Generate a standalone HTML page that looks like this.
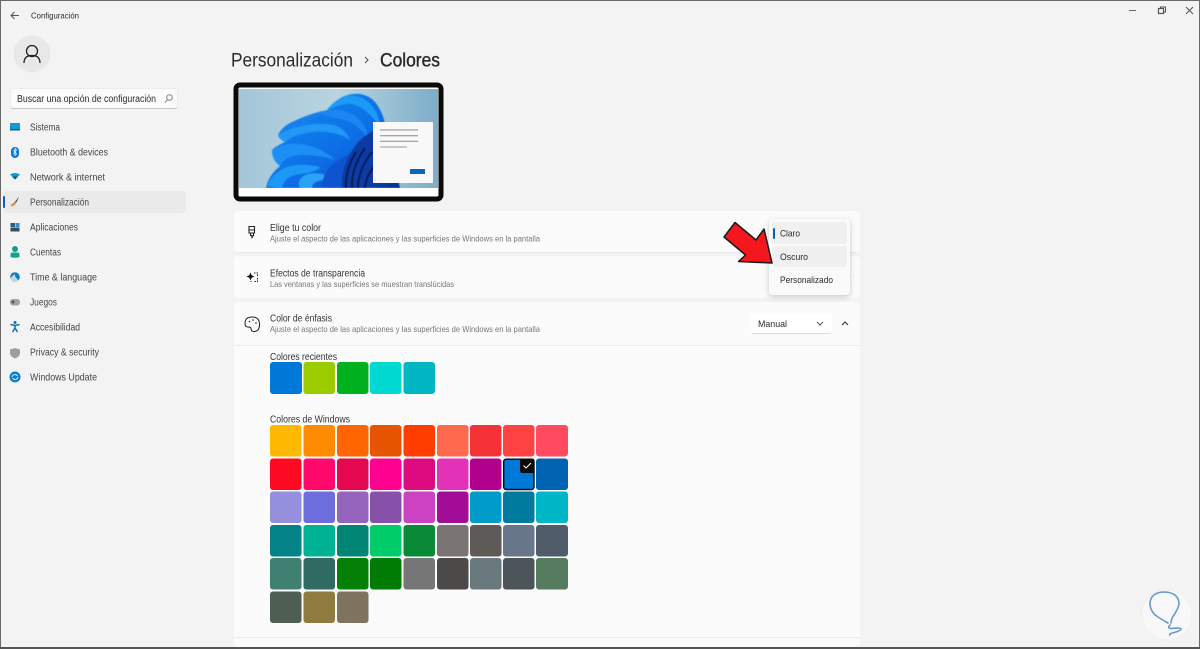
<!DOCTYPE html>
<html lang="es"><head><meta charset="utf-8"><title>Configuración</title>
<style>
html,body{margin:0;padding:0;background:#f3f3f3;width:1200px;height:649px;overflow:hidden}
svg{display:block}
text{font-family:"Liberation Sans",sans-serif;fill:#2b2b2b}
.n{font-size:10px;fill:#444}
.s{font-size:8.6px;fill:#777}
.t{font-size:9.8px;fill:#333}
</style></head><body>
<svg width="1200" height="649" viewBox="0 0 1200 649" xmlns="http://www.w3.org/2000/svg">
<defs>
<linearGradient id="bg" x1="0" y1="0" x2="1" y2="0"><stop offset="0" stop-color="#a3c6d8"/><stop offset=".5" stop-color="#b9d4e0"/><stop offset="1" stop-color="#7cadc9"/></linearGradient>
<linearGradient id="b1" x1="0" y1="0" x2="1" y2="1"><stop offset="0" stop-color="#1a8ff3"/><stop offset=".6" stop-color="#0a6be4"/><stop offset="1" stop-color="#05329a"/></linearGradient>
<filter id="sh" x="-20%" y="-20%" width="140%" height="140%"><feDropShadow dx="0" dy="2" stdDeviation="3" flood-color="#000" flood-opacity=".2"/></filter>
<filter id="bl"><feGaussianBlur stdDeviation=".5"/></filter>
<clipPath id="pv"><rect x="239" y="89" width="199" height="99"/></clipPath>
</defs>
<rect width="1200" height="649" fill="#f3f3f3"/>

<!-- title bar -->
<path d="M19 15.500H11M14.500 12L11 15.500 14.500 19" fill="none" stroke="#555" stroke-width="1"/>
<text x="31" y="18.500" font-size="8.500" textLength="48" lengthAdjust="spacingAndGlyphs" fill="#444">Configuración</text>
<path d="M1129 10.500h7" stroke="#666" stroke-width="1"/>
<rect x="1158.500" y="8.500" width="5" height="5" fill="none" stroke="#555" stroke-width="1.200"/>
<path d="M1160.500 8v-1h5v5h-1.500" fill="none" stroke="#555"/>
<path d="M1186 7l7 7M1193 7l-7 7" stroke="#555" stroke-width="1"/>

<!-- avatar -->
<circle cx="32" cy="54" r="18.500" fill="#e8e8e8"/>
<circle cx="32" cy="51" r="5.500" fill="none" stroke="#222" stroke-width="1.300"/>
<path d="M24 63c0-5.500 3.500-7.500 8-7.500s8 2 8 7.500" fill="none" stroke="#222" stroke-width="1.300"/>

<!-- search -->
<rect x="10.500" y="88.500" width="167" height="20" rx="3" fill="#fbfbfb" stroke="#ececec"/>
<path d="M11 108.500h166" stroke="#c8c8c8"/>
<text x="17" y="102" font-size="9.800" textLength="139" lengthAdjust="spacingAndGlyphs" fill="#777">Buscar una opción de configuración</text>
<circle cx="169.500" cy="97.500" r="2.800" fill="none" stroke="#888"/><path d="M167.500 99.800l-2.500 2.700" stroke="#888"/>

<!-- sidebar -->
<rect x="3" y="191" width="183" height="22" rx="4" fill="#eaeaea"/>
<rect x="3" y="196" width="2" height="12" rx="1" fill="#0a5fb4"/>
<g>
<text class="n" x="30" y="130.500" textLength="30" lengthAdjust="spacingAndGlyphs">Sistema</text>
<text class="n" x="30" y="155.500" textLength="78" lengthAdjust="spacingAndGlyphs">Bluetooth &amp; devices</text>
<text class="n" x="30" y="180.500" textLength="75" lengthAdjust="spacingAndGlyphs">Network &amp; internet</text>
<text class="n" x="30" y="205.500" textLength="59" lengthAdjust="spacingAndGlyphs">Personalización</text>
<text class="n" x="30" y="230.500" textLength="48" lengthAdjust="spacingAndGlyphs">Aplicaciones</text>
<text class="n" x="30" y="255.500" textLength="31" lengthAdjust="spacingAndGlyphs">Cuentas</text>
<text class="n" x="30" y="280.500" textLength="67" lengthAdjust="spacingAndGlyphs">Time &amp; language</text>
<text class="n" x="30" y="305.500" textLength="27" lengthAdjust="spacingAndGlyphs">Juegos</text>
<text class="n" x="30" y="330.500" textLength="50" lengthAdjust="spacingAndGlyphs">Accesibilidad</text>
<text class="n" x="30" y="355.500" textLength="69" lengthAdjust="spacingAndGlyphs">Privacy &amp; security</text>
<text class="n" x="30" y="380.500" textLength="67" lengthAdjust="spacingAndGlyphs">Windows Update</text>
</g>
<!-- sidebar icons -->
<rect x="10" y="123" width="10" height="6" fill="#0f9bd7"/><rect x="10" y="129" width="10" height="1.500" fill="#0b5f8f"/>
<rect x="11" y="147" width="8" height="11" rx="4" fill="#0a78e0"/><path d="M13.500 150l3 4-1.500 1.500v-7l1.500 1.500-3 4" fill="none" stroke="#fff" stroke-width=".7"/>
<path d="M10 174.500q5-3 10 0l-5 5z" fill="#0a9ad8"/><path d="M12.500 177q2.500-1 5 0l-2.500 2.500z" fill="#07507f"/>
<path d="M10.500 206.500q1-3 3-3.500l5.500-6-3.500 7q-2 2.500-5 2.500z" fill="#d98a4a"/><path d="M15 202l4-5.500-2.500 6z" fill="#555"/>
<rect x="10.500" y="223" width="4.500" height="4" fill="#27607f"/><rect x="10.500" y="227.500" width="9" height="4" fill="#394a5a"/><rect x="15.500" y="223" width="4" height="4" fill="#2f8fd0"/>
<circle cx="15" cy="249" r="3" fill="#0f9f8b"/><path d="M10.500 257v-2.500q0-2 2-2h5q2 0 2 2v2.500q-4.500 1.500-9 0z" fill="#10a58f"/>
<circle cx="15" cy="277" r="4.800" fill="#0a7fc6"/><path d="M10.500 278a4.500 4.500 0 0 0 8 2.500l-3-3.500-1-3z" fill="#c9d3da"/>
<rect x="10" y="299" width="10" height="6.500" rx="3" fill="#9ca4aa"/><circle cx="13" cy="302" r="1.500" fill="#4e5a62"/>
<circle cx="15" cy="322.500" r="1.500" fill="#0a72b8"/><path d="M10.500 324.500l4.500 1 4.500-1M15 325v3l-2.500 4M15 328l2.500 4" fill="none" stroke="#0a72b8" stroke-width="1.500"/>
<path d="M15 348l5 1.500v3.500q0 3.500-5 5.500-5-2-5-5.500v-3.500z" fill="#9b9fa2"/>
<circle cx="15" cy="377" r="5.500" fill="#0a7fd0"/><path d="M12 377a3 3 0 0 1 5.500-1M18 377a3 3 0 0 1-5.500 1" fill="none" stroke="#fff" stroke-width=".8"/>

<!-- heading -->
<text x="231" y="66.500" font-size="19" textLength="122" lengthAdjust="spacingAndGlyphs" fill="#5a5a5a">Personalización</text>
<path d="M365 57l3 3-3 3" fill="none" stroke="#555" stroke-width="1.100"/>
<text x="380" y="66.500" font-size="19" textLength="60" lengthAdjust="spacingAndGlyphs" fill="#1a1a1a" stroke="#1a1a1a" stroke-width=".35">Colores</text>

<!-- preview -->
<rect x="236" y="85" width="205" height="114" rx="4" fill="#fff" stroke="#0a0a0a" stroke-width="5"/>
<rect x="239" y="89" width="199" height="99" fill="url(#bg)"/>
<g clip-path="url(#pv)"><g filter="url(#bl)">
<path d="M266 188Q268 176 280 166 272 160 272 150 276 146 285 142 279 139 278 135 282 127 290 123 302 117 315 113 322 114 326 111 332 103 342 97 352 93 360 94 372 96 378 106 384 116 385 125L400 188Z" fill="url(#b1)"/>
<path d="M267 186Q272 172 290 166 305 163 320 167 318 172 300 174 284 176 282 188Z" fill="#1d98f7"/>
<path d="M300 188Q296 178 308 174 320 172 328 176 326 180 318 181 312 183 312 188Z" fill="#2aa2f8"/>
<path d="M272 150Q290 140 310 146 325 150 335 160 322 155 300 155 285 156 280 166 272 160 272 150Z" fill="#1a8ff5"/>
<path d="M278 135Q300 122 328 124 345 126 350 140 335 130 312 132 295 134 285 142 279 139 278 135Z" fill="#2097f6"/>
<path d="M315 113Q335 106 352 114 366 122 368 138 356 122 340 119 328 116 315 113Z" fill="#1a86f2"/>
<path d="M342 97Q360 92 372 106 380 116 380 128 368 108 352 104 344 102 326 111 332 103 342 97Z" fill="#1e9af8"/>
<path d="M322 188Q322 170 338 160 348 154 360 150 352 165 352 188Z" fill="#0b55cf"/>
<path d="M342 188Q340 165 358 142 366 134 378 128V188Z" fill="#0a3aa3"/>
<path d="M352 188Q351 168 365 148M358 188Q358 170 372 152M365 188Q366 176 375 165M346 188Q345 170 356 152" fill="none" stroke="#031648" stroke-width="1.800"/>
</g></g>
<rect x="239" y="188" width="199" height="8" fill="#fff"/>
<rect x="373" y="122" width="60" height="61" fill="#f8f8f8"/>
<path d="M380 130h38M380 135.700h38M380 141.300h38" stroke="#8a8a8a" stroke-width="1"/>
<path d="M380 147h27" stroke="#999" stroke-width="1"/>
<rect x="410" y="169" width="15" height="5" fill="#0a66bd"/>

<!-- cards -->
<rect x="234" y="211" width="626" height="41" rx="4" fill="#fbfbfb"/>
<path d="M238 252.500h618" stroke="#e8e8e8"/>
<rect x="234" y="256" width="626" height="42" rx="4" fill="#fbfbfb"/>
<rect x="234" y="302" width="626" height="345" rx="4" fill="#fbfbfb"/>
<path d="M234 345.500h626" stroke="#ececec"/>
<path d="M234 637.500h626" stroke="#ececec"/>

<!-- card icons -->
<path d="M249 226.500h5.500v6.500h-5.500z M249 230h5.500M250.500 233v2.500h1l.5 2 1-2h.5v-2.500" fill="none" stroke="#222" stroke-width="1.100"/>
<path d="M250.500 272.500l1.200 2.800 2.800 1.200-2.800 1.200-1.200 2.800-1.200-2.800-2.800-1.200 2.800-1.200z" fill="#111"/>
<path d="M254 273h3.500v3M257.500 278v3.500h-3M251.500 281.500h-1" fill="none" stroke="#222" stroke-dasharray="1.500 1"/>
<path d="M252 317q-7 0-7 6.500 0 3.500 3 3.500t3 1.500q0 3 3 3 5 0 5.500-6 .5-8.500-7.500-8.500z" fill="none" stroke="#222" stroke-width="1"/>
<circle cx="249.500" cy="321.500" r=".8" fill="#222"/><circle cx="253" cy="320" r=".8" fill="#222"/><circle cx="256" cy="323" r=".8" fill="#222"/>

<!-- card text -->
<text class="t" x="270" y="231" textLength="51" lengthAdjust="spacingAndGlyphs">Elige tu color</text>
<text class="s" x="270" y="241.500" textLength="270" lengthAdjust="spacingAndGlyphs">Ajuste el aspecto de las aplicaciones y las superficies de Windows en la pantalla</text>
<text class="t" x="270" y="276.500" textLength="95" lengthAdjust="spacingAndGlyphs">Efectos de transparencia</text>
<text class="s" x="270" y="287" textLength="184" lengthAdjust="spacingAndGlyphs">Las ventanas y las superficies se muestran translúcidas</text>
<text class="t" x="270" y="321.500" textLength="62" lengthAdjust="spacingAndGlyphs">Color de énfasis</text>
<text class="s" x="270" y="332" textLength="270" lengthAdjust="spacingAndGlyphs">Ajuste el aspecto de las aplicaciones y las superficies de Windows en la pantalla</text>

<!-- manual dropdown -->
<rect x="751" y="314" width="81" height="19" rx="2" fill="#fff"/>
<path d="M752 333.500h79" stroke="#ddd"/>
<text x="758" y="327" font-size="9.500" textLength="29" lengthAdjust="spacingAndGlyphs" fill="#444">Manual</text>
<path d="M817 322l3 3 3-3" fill="none" stroke="#555"/>
<path d="M842 325l3-3 3 3" fill="none" stroke="#333" stroke-width="1.100"/>
<path d="M850 275l-1 3" stroke="#999"/>

<!-- swatches recent -->
<text class="t" x="270" y="360" textLength="67" lengthAdjust="spacingAndGlyphs">Colores recientes</text>
<rect x="270" y="362" width="32" height="32" rx="3" fill="#0078d7"/>
<rect x="303.500" y="362" width="31.500" height="32" rx="3" fill="#9ccc00"/>
<rect x="337" y="362" width="31.500" height="32" rx="3" fill="#00b31e"/>
<rect x="370" y="362" width="31.500" height="32" rx="3" fill="#00d8d2"/>
<rect x="403.500" y="362" width="31.500" height="32" rx="3" fill="#00b7c3"/>

<text class="t" x="270" y="422.500" textLength="80" lengthAdjust="spacingAndGlyphs">Colores de Windows</text>
<g>
<rect x="270" y="425" width="31.500" height="31.500" rx="3" fill="#ffb900"/><rect x="303.500" y="425" width="31.500" height="31.500" rx="3" fill="#ff8c00"/><rect x="337" y="425" width="31.500" height="31.500" rx="3" fill="#ff6600"/><rect x="370" y="425" width="31.500" height="31.500" rx="3" fill="#e85500"/><rect x="403.500" y="425" width="31.500" height="31.500" rx="3" fill="#ff3d00"/><rect x="437" y="425" width="31.500" height="31.500" rx="3" fill="#ff694d"/><rect x="470" y="425" width="31.500" height="31.500" rx="3" fill="#f53238"/><rect x="503" y="425" width="31.500" height="31.500" rx="3" fill="#ff4343"/><rect x="536" y="425" width="32" height="31.500" rx="3" fill="#ff4a5f"/>
<rect x="270" y="458.500" width="31.500" height="31.500" rx="3" fill="#ff0a23"/><rect x="303.500" y="458.500" width="31.500" height="31.500" rx="3" fill="#ff0a6a"/><rect x="337" y="458.500" width="31.500" height="31.500" rx="3" fill="#e3084f"/><rect x="370" y="458.500" width="31.500" height="31.500" rx="3" fill="#ff0090"/><rect x="403.500" y="458.500" width="31.500" height="31.500" rx="3" fill="#dd0a80"/><rect x="437" y="458.500" width="31.500" height="31.500" rx="3" fill="#e232b8"/><rect x="470" y="458.500" width="31.500" height="31.500" rx="3" fill="#b0008c"/>
<rect x="503.700" y="459.200" width="30.300" height="30.300" rx="2.500" fill="#0078d7" stroke="#0a0a0a" stroke-width="1.400"/><path d="M520 458.500h12q2.500 0 2.500 2.500v12h-12q-2.500 0-2.500-2.500z" fill="#0a0a0a"/><path d="M523.500 465.500l2.500 2.500 5-5" fill="none" stroke="#fff" stroke-width="1"/>
<rect x="536" y="458.500" width="32" height="31.500" rx="3" fill="#0063b1"/>
<rect x="270" y="491.500" width="31.500" height="31.500" rx="3" fill="#9490dc"/><rect x="303.500" y="491.500" width="31.500" height="31.500" rx="3" fill="#6d6dde"/><rect x="337" y="491.500" width="31.500" height="31.500" rx="3" fill="#9764bd"/><rect x="370" y="491.500" width="31.500" height="31.500" rx="3" fill="#8750ab"/><rect x="403.500" y="491.500" width="31.500" height="31.500" rx="3" fill="#cb42c3"/><rect x="437" y="491.500" width="31.500" height="31.500" rx="3" fill="#a30c96"/><rect x="470" y="491.500" width="31.500" height="31.500" rx="3" fill="#009bc8"/><rect x="503" y="491.500" width="31.500" height="31.500" rx="3" fill="#007a9c"/><rect x="536" y="491.500" width="32" height="31.500" rx="3" fill="#00b7c8"/>
<rect x="270" y="525" width="31.500" height="31.500" rx="3" fill="#038387"/><rect x="303.500" y="525" width="31.500" height="31.500" rx="3" fill="#00b294"/><rect x="337" y="525" width="31.500" height="31.500" rx="3" fill="#018574"/><rect x="370" y="525" width="31.500" height="31.500" rx="3" fill="#00cc6a"/><rect x="403.500" y="525" width="31.500" height="31.500" rx="3" fill="#0a8a36"/><rect x="437" y="525" width="31.500" height="31.500" rx="3" fill="#7a7574"/><rect x="470" y="525" width="31.500" height="31.500" rx="3" fill="#5d5a58"/><rect x="503" y="525" width="31.500" height="31.500" rx="3" fill="#68768a"/><rect x="536" y="525" width="32" height="31.500" rx="3" fill="#515c6b"/>
<rect x="270" y="558" width="31.500" height="31.500" rx="3" fill="#408073"/><rect x="303.500" y="558" width="31.500" height="31.500" rx="3" fill="#2f6b62"/><rect x="337" y="558" width="31.500" height="31.500" rx="3" fill="#058005"/><rect x="370" y="558" width="31.500" height="31.500" rx="3" fill="#007c04"/><rect x="403.500" y="558" width="31.500" height="31.500" rx="3" fill="#767676"/><rect x="437" y="558" width="31.500" height="31.500" rx="3" fill="#4c4a48"/><rect x="470" y="558" width="31.500" height="31.500" rx="3" fill="#69797e"/><rect x="503" y="558" width="31.500" height="31.500" rx="3" fill="#4a5459"/><rect x="536" y="558" width="32" height="31.500" rx="3" fill="#567c5f"/>
<rect x="270" y="591.500" width="31.500" height="31.500" rx="3" fill="#4f5e52"/><rect x="303.500" y="591.500" width="31.500" height="31.500" rx="3" fill="#8f7a40"/><rect x="337" y="591.500" width="31.500" height="31.500" rx="3" fill="#7e735f"/>
</g>

<!-- flyout -->
<rect x="769" y="219" width="81" height="76" rx="4" fill="#fafafa" filter="url(#sh)"/>
<rect x="772" y="222" width="75" height="22" rx="3" fill="#f0f0f0"/>
<rect x="772" y="246" width="75" height="21" rx="3" fill="#f0f0f0"/>
<rect x="773" y="228" width="2" height="11" rx="1" fill="#0a5fb4"/>
<text x="780" y="236.500" font-size="9.500" textLength="20" lengthAdjust="spacingAndGlyphs" fill="#444">Claro</text>
<text x="780" y="260" font-size="9.500" textLength="28" lengthAdjust="spacingAndGlyphs" fill="#444">Oscuro</text>
<text x="780" y="283" font-size="9.500" textLength="53" lengthAdjust="spacingAndGlyphs" fill="#444">Personalizado</text>

<!-- red arrow -->
<path d="M772 263L738.500 261.500 745.500 255 724 237 735 222.500 756 240 764 229z" fill="#f5171d" stroke="#1a1a1a" stroke-width="1.500" stroke-linejoin="round"/>

<!-- watermark -->
<circle cx="1167" cy="615" r="25" fill="#f8f8f8" stroke="#efefef"/>
<path d="M1171 623q0-4 3-8 4-6 5-11 0-11-14-12-14 0-15 11 0 9 8 14 3 2 10 6M1170 625q-3 3 1 3.500 10-1 10 .5 0 2-9 4-3 1-2 2" fill="none" stroke="#6b98cc" stroke-width="1.600" stroke-linecap="round"/>

<!-- window frame -->
<path d="M0 .5h1200" stroke="#6a6a6a"/>
<path d="M.5 0v649" stroke="#6a6a6a"/>
<path d="M1199.500 0v649" stroke="#6a6a6a"/>
<rect x="0" y="647" width="1200" height="2" fill="#555"/>
</svg>
</body></html>
